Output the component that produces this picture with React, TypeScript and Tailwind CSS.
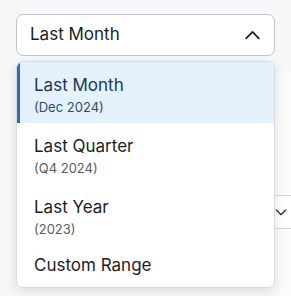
import { useState } from 'react'

interface RangeOption {
  label: string;
  sub?: string;
}

const options: RangeOption[] = [
  { label: 'Last Month', sub: '(Dec 2024)' },
  { label: 'Last Quarter', sub: '(Q4 2024)' },
  { label: 'Last Year', sub: '(2023)' },
  { label: 'Custom Range' },
]

export default function App() {
  const [selected, setSelected] = useState(0)
  const [open, setOpen] = useState(true)

  return (
    <div
      className="relative min-h-[296px] w-[291px] overflow-hidden bg-[#f6f7f9] text-[#1f1f1f]"
      style={{ fontFamily: 'Inter, "Noto Sans", sans-serif' }}
    >
      <div className="pl-4 pt-[14px]">
        <button
          type="button"
          onClick={() => setOpen(o => !o)}
          className="flex h-[42px] w-[259px] items-center justify-between rounded-[7px] border border-[#c4c6ca] bg-white pl-[13px] pr-[12px] text-[17px] text-[#1d1d1f]"
        >
          <span>{options[selected].label}</span>
          <svg width="19" height="19" viewBox="0 0 24 24" fill="none" stroke="#1d1d1f" strokeWidth="2.2" strokeLinecap="round" strokeLinejoin="round">
            <path d={open ? 'M4 15.5l8-8 8 8' : 'M4 8.5l8 8 8-8'} />
          </svg>
        </button>

        {/* card behind the menu */}
        <div className="mt-4 h-[230px] bg-[#fbfbfc] pt-[123px]">
          <div className="flex h-[34px] items-center justify-end border-y border-[#d4d6da] bg-white pr-[2px]">
            <svg width="16" height="16" viewBox="0 0 24 24" fill="none" stroke="#333" strokeWidth="2" strokeLinecap="round" strokeLinejoin="round">
              <path d="M5 9l7 7 7-7" />
            </svg>
          </div>
        </div>
      </div>

      {open && (
        <div className="absolute left-4 top-[61px] w-[259px] overflow-hidden rounded-[7px] border border-[#d9dbdf] bg-white shadow-[0_4px_12px_rgba(0,0,0,0.12)]">
          {options.map((opt, i) => (
            <button
              key={opt.label}
              type="button"
              onClick={() => { setSelected(i); setOpen(false) }}
              className={`flex w-full flex-col items-start pl-[14px] text-left ${
                opt.sub ? 'h-[61px] pt-[12px]' : 'h-[42px] pt-[9px]'
              } ${
                i === selected
                  ? 'border-l-[3px] border-[#2f6db3] bg-[#e3f2fd] text-[#1c3656]'
                  : 'border-l-[3px] border-transparent text-[#1d1d1f]'
              }`}
            >
              <span className="text-[17px] leading-[22px]">{opt.label}</span>
              {opt.sub && (
                <span className={`mt-[2px] text-[13px] leading-[18px] ${i === selected ? 'text-[#2f4b6c]' : 'text-[#5c5c5c]'}`}>
                  {opt.sub}
                </span>
              )}
            </button>
          ))}
        </div>
      )}
    </div>
  )
}
